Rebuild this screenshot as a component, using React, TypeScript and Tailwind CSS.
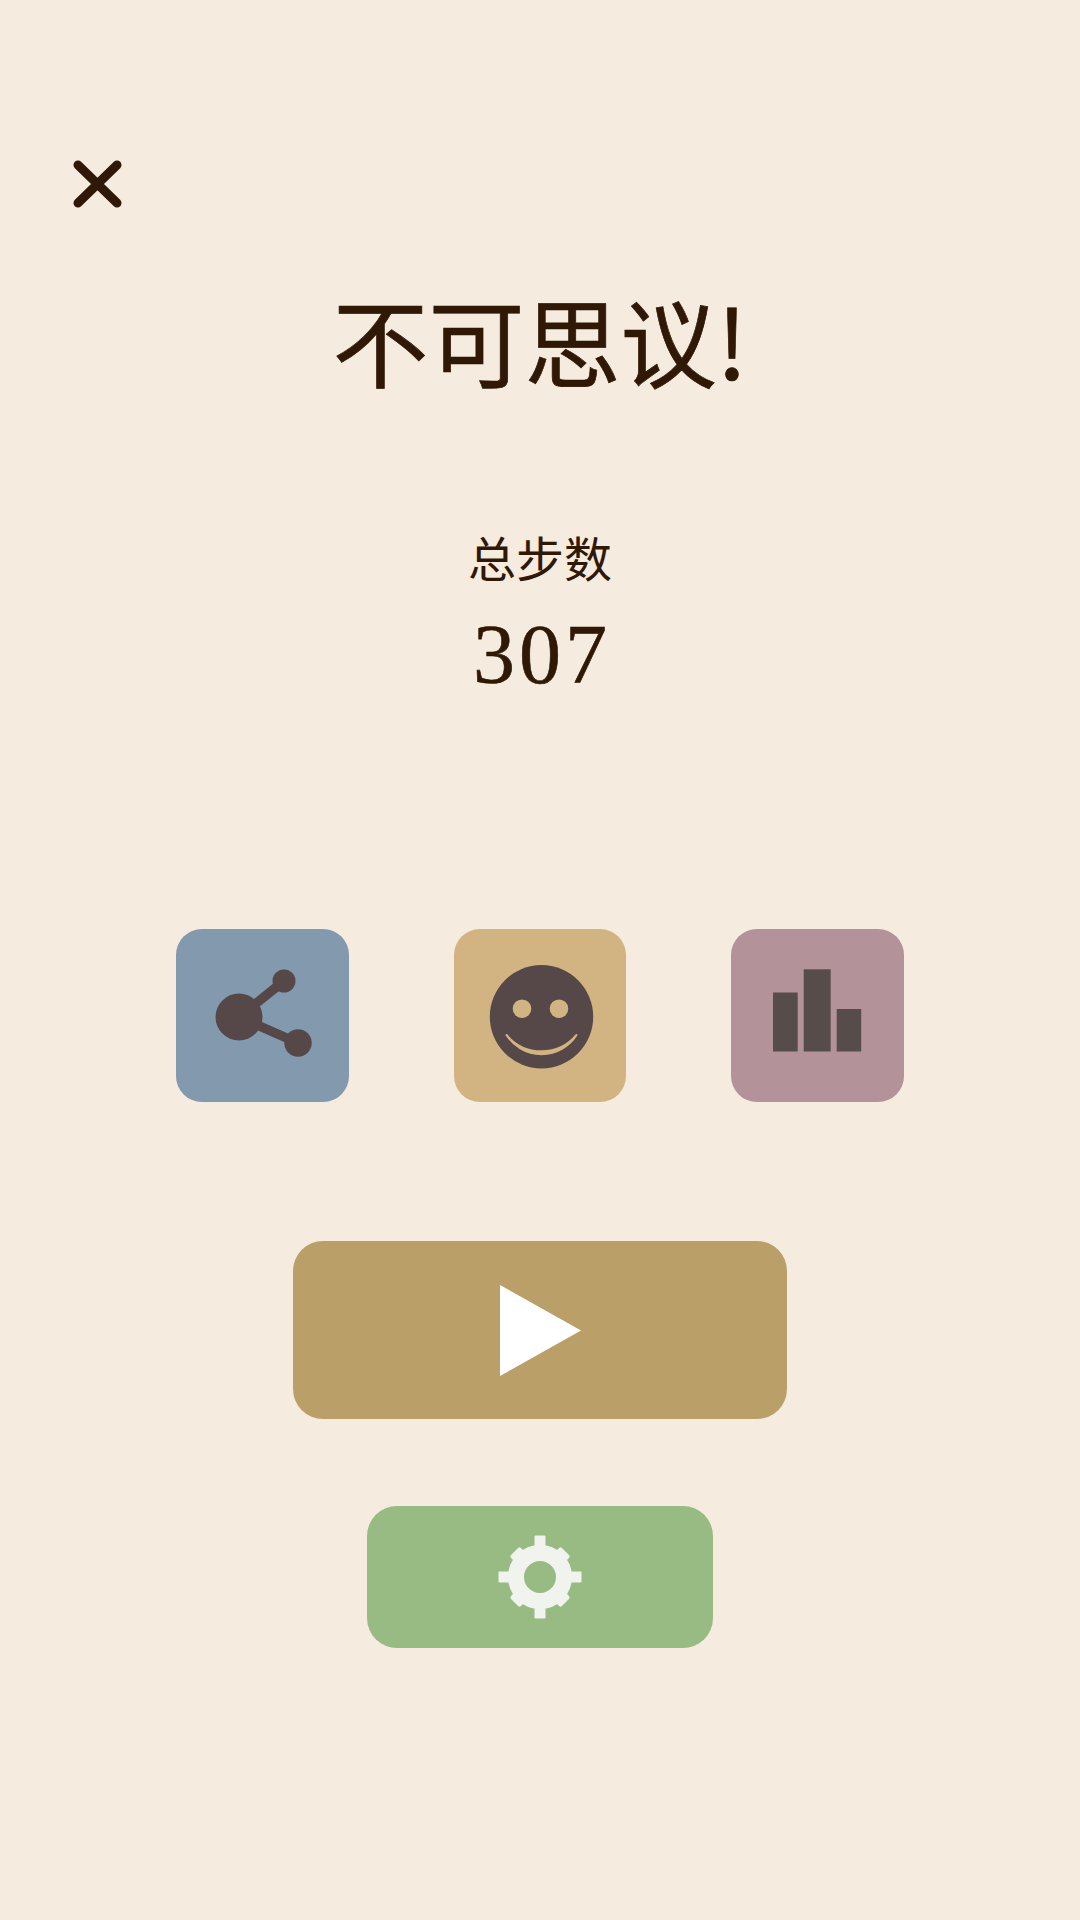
function SquareButton({ color, width, children }: { color: string; width: string; children: React.ReactNode }) {
  return (
    <button className={`flex h-[173px] items-center justify-center rounded-[26px] ${width} ${color}`}>
      {children}
    </button>
  );
}

function ShareIcon() {
  return (
    <svg viewBox="0 0 173 173" className="h-[173px] w-[173px]" fill="#564848">
      <path d="M63 88 L108 52 M63 88 L122 114" stroke="#564848" strokeWidth="9.5" />
      <circle cx="63" cy="88" r="23.5" />
      <circle cx="108" cy="52" r="11.5" />
      <circle cx="122" cy="114" r="13.7" />
    </svg>
  );
}

function SmileIcon() {
  return (
    <svg viewBox="0 0 172 173" className="h-[173px] w-[172px]">
      <circle cx="87.5" cy="87.7" r="51.7" fill="#564848" />
      <circle cx="68" cy="79.7" r="9.3" fill="#d2b382" />
      <circle cx="105" cy="79.7" r="9.3" fill="#d2b382" />
      <path
        d="M52.5 106 A41.5 41.5 0 0 0 122.5 106 A45.6 45.6 0 0 1 52.5 106 Z"
        fill="#d2b382"
        stroke="#d2b382"
        strokeWidth="2"
        strokeLinejoin="round"
      />
    </svg>
  );
}

function BarsIcon() {
  return (
    <svg viewBox="0 0 173 173" className="h-[173px] w-[173px]" fill="#564d4b">
      <rect x="42" y="63.5" width="24.7" height="59" />
      <rect x="72.7" y="40.3" width="27" height="82.2" />
      <rect x="105.7" y="80" width="24.5" height="42.5" />
    </svg>
  );
}

function GearIcon() {
  const angles = [45, 135, 225, 315];
  return (
    <svg viewBox="0 0 84 84" className="h-[84px] w-[84px]" fill="#f0f3ee">
      <circle cx="42" cy="42" r="24" fill="none" stroke="#f0f3ee" strokeWidth="16" />
      <rect x="36.5" y="0.5" width="11" height="18" rx="1" />
      <rect x="36.5" y="65.5" width="11" height="18" rx="1" />
      <rect x="0.5" y="36.5" width="18" height="11" rx="1" />
      <rect x="65.5" y="36.5" width="18" height="11" rx="1" />
      {angles.map((a) => (
        <rect key={a} x="35" y="6" width="14" height="14" rx="2" transform={`rotate(${a} 42 42)`} />
      ))}
    </svg>
  );
}

export default function App() {
  return (
    <div className="flex h-[1920px] w-[1080px] flex-col items-center overflow-hidden bg-[#f5ebde] font-['Noto_Sans_CJK_SC',sans-serif] text-[#2f1805]">
      <button className="mt-[160px] ml-[73px] self-start">
        <svg viewBox="0 0 49 48" className="block h-[48px] w-[49px]" stroke="#2f1805" strokeWidth="9" strokeLinecap="round">
          <path d="M5 5 L44 43 M44 5 L5 43" />
        </svg>
      </button>

      <h1 className="mt-[71px] text-[96px] leading-[120px] font-normal [-webkit-text-stroke:0.7px_#2f1805]">不可思议!</h1>
      <p className="mt-[127px] text-[48px] leading-[60px]">总步数</p>
      <p className="mt-[21px] ml-[4px] font-['Liberation_Serif',serif] text-[84px] leading-[96px] tracking-[4px] [-webkit-text-stroke:0.6px_#2f1805]">
        307
      </p>

      <div className="mt-[226px] flex gap-[105px]">
        <SquareButton color="bg-[#8299ae]" width="w-[173px]"><ShareIcon /></SquareButton>
        <SquareButton color="bg-[#d2b382]" width="w-[172px]"><SmileIcon /></SquareButton>
        <SquareButton color="bg-[#b39299]" width="w-[173px]"><BarsIcon /></SquareButton>
      </div>

      <button className="mt-[139px] flex h-[178px] w-[494px] items-center justify-center rounded-[30px] bg-[#bb9f69]">
        <svg viewBox="0 0 81 91" className="ml-[1px] h-[91px] w-[81px]" fill="#ffffff">
          <path d="M0 0 L81 45.5 L0 91 Z" />
        </svg>
      </button>

      <button className="mt-[87px] flex h-[142px] w-[346px] items-center justify-center rounded-[30px] bg-[#98bb83]">
        <GearIcon />
      </button>
    </div>
  );
}
